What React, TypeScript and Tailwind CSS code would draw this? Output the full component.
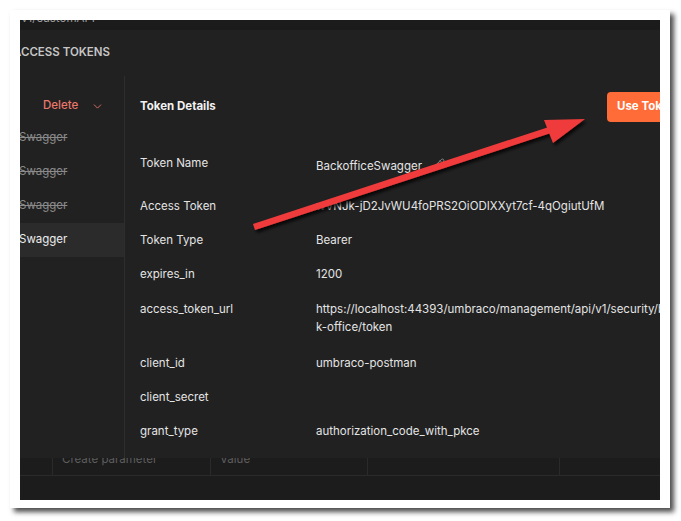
import { ChevronDown, Pencil } from "lucide-react";

const rows = [
  { label: "Access Token", value: "wVNJk-jD2JvWU4foPRS2OiODIXXyt7cf-4qOgiutUfM" },
  { label: "Token Type", value: "Bearer" },
  { label: "expires_in", value: "1200" },
];

const rowsAfter = [
  { label: "client_id", value: "umbraco-postman" },
  { label: "client_secret", value: "" },
  { label: "grant_type", value: "authorization_code_with_pkce" },
];

const TokenRow = ({ label, value }: { label: string; value: string }) => (
  <div className="flex py-[8px] leading-[18px]">
    <div className="w-[176px] shrink-0">{label}</div>
    <div className="whitespace-nowrap">{value}</div>
  </div>
);

const App = () => {
  return (
    <div className="relative w-[681px] h-[521px] overflow-hidden bg-white pt-[10px] pl-[10px] font-['Inter','Noto_Sans',sans-serif] text-[11.5px]">
      {/* screenshot frame */}
      <div className="w-[660px] h-[498px] bg-white pt-[10px] px-[10px] pb-[8px] shadow-[4px_4px_5px_rgba(0,0,0,0.7)]">
        <div className="w-[640px] h-[480px] bg-[#212121] overflow-hidden flex flex-col">
          {/* cut off url bar */}
          <div className="h-[10px] shrink-0 bg-[#1b1b1b] overflow-hidden">
            <div className="-mt-[10px] -ml-[3px] leading-[16px] text-[#9a9a9a] whitespace-nowrap">
              /v1/customAPI
            </div>
          </div>

          {/* access tokens header */}
          <div className="h-[46px] shrink-0 flex items-center">
            <div className="-ml-[7px] font-semibold text-[#c6c6c6] whitespace-nowrap">ACCESS TOKENS</div>
          </div>

          <div className="flex h-[382px] shrink-0">
            {/* sidebar */}
            <div className="w-[105px] shrink-0 border-r border-[#2e2e2e]">
              <div className="mt-[15px] h-[30px] flex items-center pl-[23px] text-[#e9786c] font-medium">
                Delete
                <ChevronDown size={13} strokeWidth={1.6} className="ml-[13px]" />
              </div>
              <div className="h-[34px] flex items-center -ml-[1px] text-[#8a8a8a] line-through">Swagger</div>
              <div className="h-[34px] flex items-center -ml-[1px] text-[#8a8a8a] line-through">Swagger</div>
              <div className="h-[34px] flex items-center -ml-[1px] text-[#8a8a8a] line-through">Swagger</div>
              <div className="h-[34px] flex items-center -ml-[1px] bg-[#2b2b2b] text-[#ececec]">Swagger</div>
            </div>

            {/* token details */}
            <div className="flex-1 pl-[15px] text-[#e4e4e4] overflow-hidden">
              <div className="mt-[16px] h-[30px] flex items-center">
                <div className="w-[467px] shrink-0 font-bold text-[#f2f2f2]">Token Details</div>
                <button className="h-[30px] shrink-0 px-[10px] rounded-[4px] bg-[#ff6c37] text-white font-bold whitespace-nowrap">
                  Use Token
                </button>
              </div>

              <div className="mt-[24px] flex h-[43px]">
                <div className="w-[176px] shrink-0 pt-[9px] leading-[16px]">Token Name</div>
                <div className="mt-[5px] h-[32px] flex items-center whitespace-nowrap">
                  BackofficeSwagger
                  <Pencil size={13} strokeWidth={1.8} className="ml-[10px] mb-[6px] text-[#8c8c8c]" />
                </div>
              </div>

              {rows.map((r) => (
                <TokenRow key={r.label} label={r.label} value={r.value} />
              ))}

              <div className="flex pt-[9px] pb-[10px] leading-[18px]">
                <div className="w-[176px] shrink-0">access_token_url</div>
                <div className="whitespace-nowrap">
                  <div>https://localhost:44393/umbraco/management/api/v1/security/back</div>
                  <div>k-office/token</div>
                </div>
              </div>

              {rowsAfter.map((r) => (
                <TokenRow key={r.label} label={r.label} value={r.value} />
              ))}
            </div>
          </div>

          {/* table behind the modal */}
          <div className="flex-1 bg-[#1c1c1c] overflow-hidden">
            <div className="flex h-[18px] border-b border-[#2a2a2a] text-[#5e5e5e]">
              <div className="w-[32px] shrink-0" />
              <div className="w-[158px] shrink-0 border-l border-[#2a2a2a] pl-[9px] overflow-hidden">
                <div className="-mt-[7px] leading-[16px] whitespace-nowrap">Create parameter</div>
              </div>
              <div className="w-[157px] shrink-0 border-l border-[#2a2a2a] pl-[9px] overflow-hidden">
                <div className="-mt-[7px] leading-[16px]">Value</div>
              </div>
              <div className="w-[193px] shrink-0 border-l border-r border-[#2a2a2a]" />
            </div>
          </div>
        </div>
      </div>

      {/* red annotation arrow */}
      <svg className="absolute left-0 top-0 pointer-events-none" width="681" height="521">
        <defs>
          <filter id="arrowShadow" x="-20%" y="-40%" width="140%" height="180%">
            <feDropShadow dx="2" dy="3" stdDeviation="1.4" floodColor="#000" floodOpacity="0.75" />
          </filter>
        </defs>
        <g filter="url(#arrowShadow)">
          <line x1="254" y1="227" x2="556" y2="128" stroke="#ef3b3b" strokeWidth="6.5" />
          <polygon points="585,119 544,120 553,143" fill="#ef3b3b" />
        </g>
      </svg>
    </div>
  );
};

export default App;
